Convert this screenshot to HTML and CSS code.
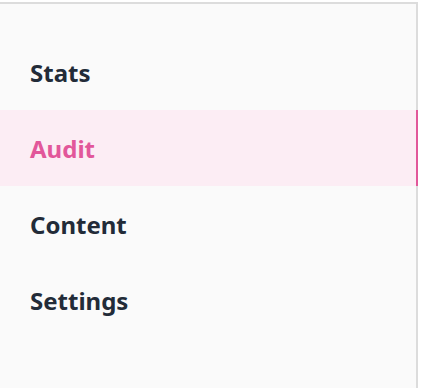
FILE: index.html
```html
<!DOCTYPE html>
<html lang="en">
<head>
    <meta charset="UTF-8">
    <meta name="viewport" content="width=device-width, initial-scale=1.0">
    <title>Menu</title>
    <link rel="stylesheet" href="styles.css">
</head>
<body>
    <nav class="sidebar">
        <ul class="menu">
            <li><a href="#" class="menu-item">Stats</a></li>
            <li><a href="#" class="menu-item active">Audit</a></li>
            <li><a href="#" class="menu-item">Content</a></li>
            <li><a href="#" class="menu-item">Settings</a></li>
        </ul>
    </nav>
</body>
</html>
```
FILE: styles.css
```css
html, body {
    height: 100%;
}

body {
    font-family: "Noto Sans", Arial, sans-serif;
    margin: 0;
    padding: 0;
    background-color: #fff;
}

.sidebar {
    box-sizing: border-box;
    width: 418px;
    height: calc(100% - 2px);
    margin-top: 2px;
    background-color: #fafafa;
    border-top: 2px solid #dcdcdc;
    border-right: 2px solid #dcdcdc;
}

.menu {
    list-style: none;
    margin: 0;
    padding: 30px 0 0 0;
}

.menu-item {
    display: flex;
    align-items: center;
    height: 76px;
    padding-left: 30px;
    margin-right: -2px;
    font-size: 24px;
    font-weight: 700;
    color: #222b38;
    text-decoration: none;
    border-right: 2px solid transparent;
}

.menu-item.active {
    color: #e2579a;
    background-color: #fcedf4;
    border-right-color: #e2579a;
}
```
